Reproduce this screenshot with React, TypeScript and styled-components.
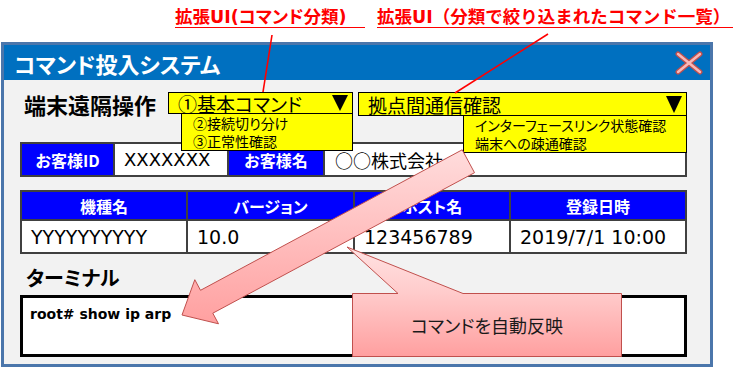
import React from "react";
import styled, { createGlobalStyle } from "styled-components";

const JP = `"Noto Sans CJK JP", sans-serif`;
const MIX = `"DejaVu Sans", "Noto Sans CJK JP", sans-serif`;

const Global = createGlobalStyle`
  html, body { margin: 0; padding: 0; background: #ffffff; }
  body {
    width: 750px; height: 371px; overflow: hidden;
    font-family: ${JP};
    font-feature-settings: "palt";
    color: #000;
  }
  * { box-sizing: border-box; }
`;

const Page = styled.div`
  position: relative;
  width: 750px;
  height: 371px;
`;

const Notes = styled.div`
  display: flex;
  gap: 12px;
  height: 42px;
  padding: 7px 0 0 175px;
`;

const Note = styled.div<{ $w: number; $wide?: boolean }>`
  width: ${(p) => p.$w}px;
  height: 21px;
  font-family: ${MIX};
  font-weight: 700;
  font-size: 17.5px;
  line-height: 20px;
  color: #ff0000;
  border-bottom: 1px solid #ff0000;
  white-space: nowrap;
  font-feature-settings: ${(p) => (p.$wide ? "normal" : `"palt"`)};
`;

const Window = styled.div`
  margin-left: 1px;
  width: 712px;
  border: 3px solid #4b76ab;
  background: #f2f2f2;
`;

const TitleBar = styled.div`
  height: 35px;
  background: #0070c0;
  display: flex;
  align-items: center;
  justify-content: space-between;
  padding: 0 7px 0 10px;
`;

const Title = styled.div`
  color: #ffffff;
  font-weight: 700;
  font-size: 22px;
  line-height: 1;
`;

const Body = styled.div`
  display: flex;
  flex-direction: column;
  padding: 12px 0 7px 16px;
`;

const ControlRow = styled.div`
  display: flex;
  align-items: flex-start;
  height: 24px;
`;

const SectionLabel = styled.div<{ $w?: number }>`
  width: ${(p) => (p.$w ? `${p.$w}px` : "auto")};
  padding-left: ${(p) => (p.$w ? 4 : 6)}px;
  font-weight: 700;
  font-size: ${(p) => (p.$w ? 22 : 20)}px;
  line-height: 24px;
  white-space: nowrap;
`;

const Select = styled.div<{ $w: number; $h: number; $ml?: number }>`
  position: relative;
  width: ${(p) => p.$w}px;
  height: ${(p) => p.$h}px;
  margin-left: ${(p) => p.$ml ?? 0}px;
  background: #ffff00;
  border: 1px solid #000;
  display: flex;
  align-items: center;
  justify-content: space-between;
  padding: 0 4px 0 9px;
  font-size: 19px;
  line-height: 1;
  white-space: nowrap;
`;

const Caret = styled.span<{ $s: number }>`
  width: 0;
  height: 0;
  border-left: ${(p) => p.$s / 2}px solid transparent;
  border-right: ${(p) => p.$s / 2}px solid transparent;
  border-top: ${(p) => p.$s}px solid #000;
`;

const Menu = styled.div<{ $left: number }>`
  position: absolute;
  top: 100%;
  left: ${(p) => p.$left}px;
  right: -1px;
  background: #ffff00;
  border: 1px solid #000;
  padding: 0 0 0 11px;
  z-index: 2;
`;

const MenuItem = styled.div`
  font-size: 14px;
  line-height: 18px;
  white-space: nowrap;
`;

const Grid = styled.div<{ $cols: string; $rows: string; $mt: number }>`
  display: grid;
  grid-template-columns: ${(p) => p.$cols};
  grid-template-rows: ${(p) => p.$rows};
  gap: 2px;
  padding: 2px;
  margin-top: ${(p) => p.$mt}px;
  width: 667px;
  background: #404040;
`;

const HeadCell = styled.div`
  background: #0000ff;
  color: #ffffff;
  font-weight: 700;
  font-size: 16px;
  display: flex;
  align-items: center;
  justify-content: center;
  white-space: nowrap;
`;

const DataCell = styled.div<{ $jp?: boolean; $size: number }>`
  background: #ffffff;
  font-family: ${(p) => (p.$jp ? JP : MIX)};
  font-size: ${(p) => p.$size}px;
  padding-left: ${(p) => (p.$jp ? 10 : 9)}px;
  display: flex;
  align-items: center;
  white-space: nowrap;
  overflow: hidden;
`;

const TerminalHead = styled.div`
  margin-top: 12px;
  margin-bottom: 5px;
`;

const Terminal = styled.div`
  width: 667px;
  height: 62px;
  background: #ffffff;
  border: 3px solid #000;
  padding: 7px 0 0 7px;
  font-family: ${MIX};
  font-weight: 700;
  font-size: 14px;
  line-height: 18px;
`;

const Overlay = styled.svg`
  position: absolute;
  left: 0;
  top: 0;
  width: 750px;
  height: 371px;
  pointer-events: none;
  z-index: 5;
`;

const CalloutText = styled.div`
  position: absolute;
  left: 352px;
  top: 293px;
  width: 270px;
  height: 64px;
  display: flex;
  align-items: center;
  justify-content: center;
  font-size: 18px;
  color: #1a1a1a;
  z-index: 6;
`;

const CloseIcon = () => (
  <svg width="28" height="24" viewBox="0 0 28 24">
    <g strokeLinecap="round">
      <line x1="3" y1="3" x2="25" y2="21" stroke="#c0504d" strokeWidth="5" />
      <line x1="25" y1="3" x2="3" y2="21" stroke="#c0504d" strokeWidth="5" />
      <line x1="3" y1="3" x2="25" y2="21" stroke="#f8b8b8" strokeWidth="2.4" />
      <line x1="25" y1="3" x2="3" y2="21" stroke="#f8b8b8" strokeWidth="2.4" />
    </g>
  </svg>
);

export default function App() {
  return (
    <>
      <Global />
      <Page>
        <Notes>
          <Note $w={190}>拡張UI(コマンド分類)</Note>
          <Note $w={356} $wide>拡張UI（分類で絞り込まれたコマンド一覧）</Note>
        </Notes>
        <Window>
          <TitleBar>
            <Title>コマンド投入システム</Title>
            <CloseIcon />
          </TitleBar>
          <Body>
            <ControlRow>
              <SectionLabel $w={148}>端末遠隔操作</SectionLabel>
              <Select $w={185} $h={22}>
                <span>①基本コマンド</span>
                <Caret $s={16} />
                <Menu $left={12}>
                  <MenuItem>②接続切り分け</MenuItem>
                  <MenuItem>③正常性確認</MenuItem>
                </Menu>
              </Select>
              <Select $w={329} $h={24} $ml={5}>
                <span>拠点間通信確認</span>
                <Caret $s={17} />
                <Menu $left={104}>
                  <MenuItem>インターフェースリンク状態確認</MenuItem>
                  <MenuItem>端末への疎通確認</MenuItem>
                </Menu>
              </Select>
            </ControlRow>

            <Grid $cols="91px 112px 94px 1fr" $rows="31px" $mt={26}>
              <HeadCell>お客様ID</HeadCell>
              <DataCell $size={18}>XXXXXXX</DataCell>
              <HeadCell>お客様名</HeadCell>
              <DataCell $jp $size={18}>○○株式会社</DataCell>
            </Grid>

            <Grid $cols="164px 165px 154px 1fr" $rows="27px 31px" $mt={13}>
              <HeadCell>機種名</HeadCell>
              <HeadCell>バージョン</HeadCell>
              <HeadCell>ホスト名</HeadCell>
              <HeadCell>登録日時</HeadCell>
              <DataCell $size={19}>YYYYYYYYYY</DataCell>
              <DataCell $size={19}>10.0</DataCell>
              <DataCell $size={19}>123456789</DataCell>
              <DataCell $size={19}>2019/7/1 10:00</DataCell>
            </Grid>

            <TerminalHead>
              <SectionLabel>ターミナル</SectionLabel>
            </TerminalHead>
            <Terminal>root# show ip arp</Terminal>
          </Body>
        </Window>

        <Overlay viewBox="0 0 750 371">
          <defs>
            <linearGradient id="calloutFill" gradientUnits="userSpaceOnUse" x1="0" y1="247" x2="0" y2="357">
              <stop offset="0" stopColor="#ffe2e2" />
              <stop offset="0.42" stopColor="#ffcbcb" />
              <stop offset="1" stopColor="#ff9f9f" />
            </linearGradient>
            <linearGradient id="arrowFill" gradientUnits="userSpaceOnUse" x1="0" y1="150" x2="0" y2="324">
              <stop offset="0" stopColor="#ffdcdc" />
              <stop offset="1" stopColor="#ffa0a0" />
            </linearGradient>
          </defs>
          <line x1="272" y1="35" x2="263" y2="92" stroke="#ff0000" strokeWidth="1.6" />
          <line x1="548" y1="34" x2="455" y2="93" stroke="#ff0000" strokeWidth="1.6" />
          <path
            d="M352.5,293.5 L398,293.5 L347,247 L463,293.5 L621.5,293.5 L621.5,356.5 L352.5,356.5 Z"
            fill="url(#calloutFill)"
            stroke="#c0504d"
            strokeWidth="1"
          />
          <polygon
            points="182,315 194.8,279.7 200.5,290.3 462.2,149.8 474.5,172.7 212.8,313.2 218.5,323.8"
            fill="url(#arrowFill)"
            stroke="#c0504d"
            strokeWidth="1"
            strokeLinejoin="miter"
          />
        </Overlay>
        <CalloutText>コマンドを自動反映</CalloutText>
      </Page>
    </>
  );
}
